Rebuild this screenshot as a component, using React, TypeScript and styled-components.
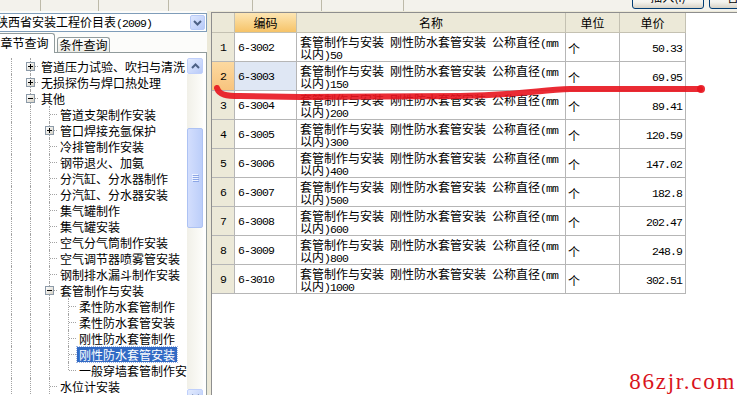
import { FC } from "react";
import styled, { createGlobalStyle, css } from "styled-components";

const GlobalStyle = createGlobalStyle`
  html, body {
    margin: 0;
    padding: 0;
  }
  body {
    width: 737px;
    height: 395px;
    overflow: hidden;
    background: #ece9d8;
    font-family: "Noto Sans CJK SC", "Liberation Sans", sans-serif;
    font-size: 12px;
    color: #000;
  }
`;

const Page = styled.div`
  position: relative;
  width: 737px;
  height: 395px;
  display: flex;
  flex-direction: column;
  overflow: hidden;
`;

// top strip, mostly cut off by the screenshot
const Toolbar = styled.div`
  height: 11px;
  flex: none;
  display: flex;
  align-items: flex-end;
  background: #f3f2ec;
  overflow: hidden;
`;

const ToolSlot = styled.div<{ $w: number }>`
  width: ${(p) => p.$w}px;
  height: 100%;
  flex: none;
  box-sizing: border-box;
  border-right: 1px solid #bdbaa9;
`;

const ToolSpacer = styled.div`
  flex: 1;
`;

const ToolButton = styled.div<{ $w: number; $gap: number; $pad?: number }>`
  flex: none;
  width: ${(p) => p.$w}px;
  height: 22px;
  margin: 0 0 2px ${(p) => p.$gap}px;
  box-sizing: border-box;
  border: 1px solid #003c74;
  border-radius: 3px;
  background: linear-gradient(#ffffff, #f4f3ee 70%, #d8d2c6);
  text-align: ${(p) => (p.$pad ? "left" : "center")};
  padding-left: ${(p) => p.$pad ?? 0}px;
  line-height: 17px;
  white-space: nowrap;
  &:last-child {
    margin-right: -32px;
  }
`;

const Main = styled.div`
  flex: 1;
  min-height: 0;
  display: flex;
`;

const LeftPanel = styled.div`
  width: 207px;
  flex: none;
  display: flex;
  flex-direction: column;
  padding-top: 2px;
  background: #fcfcfa;
`;

const Combo = styled.div`
  height: 19px;
  flex: none;
  display: flex;
  align-items: center;
  box-sizing: border-box;
  margin-left: -7px;
  padding-left: 2px;
  border: 1px solid #7f9db9;
  background: #fff;
`;

const ComboText = styled.span`
  flex: 1;
  white-space: nowrap;
  overflow: hidden;
  line-height: 17px;
`;

const ComboButton = styled.span`
  width: 15px;
  height: 15px;
  margin-right: 1px;
  flex: none;
  box-sizing: border-box;
  border: 1px solid #b9cbf7;
  border-radius: 2px;
  background: linear-gradient(135deg, #dde7fe, #b6c9f8);
  display: flex;
  align-items: center;
  justify-content: center;
`;

const Latin = styled.span`
  font-family: "Liberation Mono", monospace;
  font-size: 11.5px;
  letter-spacing: -0.9px;
`;

const TabStrip = styled.div`
  height: 20px;
  flex: none;
  margin-top: 1px;
  margin-bottom: -1px;
  display: flex;
  align-items: flex-end;
  position: relative;
  z-index: 1;
`;

const Tab = styled.div<{ $active?: boolean }>`
  flex: none;
  box-sizing: border-box;
  border: 1px solid #919b9c;
  border-bottom: none;
  border-radius: 3px 3px 0 0;
  text-align: center;
  white-space: nowrap;
  ${(p) =>
    p.$active
      ? css`
          width: 61px;
          height: 20px;
          margin-left: -6px;
          line-height: 18px;
          background: #fff;
        `
      : css`
          width: 53px;
          height: 15px;
          margin: 0 0 1px 2px;
          line-height: 14px;
          background: linear-gradient(#ffffff, #ecebe5);
        `}
`;

const TreeBox = styled.div`
  flex: 1;
  min-height: 0;
  display: flex;
  padding: 5px 3px 0 0;
  border-top: 1px solid #919b9c;
  border-right: 1px solid #919b9c;
  background: #fff;
  overflow: hidden;
`;

const TreeList = styled.div`
  flex: 1;
  min-width: 0;
  padding-left: 2px;
  overflow: hidden;
`;

const TreeRow = styled.div`
  display: flex;
  height: 16px;
  white-space: nowrap;
`;

const Guide = styled.span`
  position: relative;
  width: 19px;
  flex: none;
  &::before {
    content: "";
    position: absolute;
    left: 9px;
    top: 0;
    bottom: 0;
    border-left: 1px dotted #a3a3a3;
  }
`;

const Joint = styled.span<{ $last?: boolean }>`
  position: relative;
  width: 19px;
  flex: none;
  &::before {
    content: "";
    position: absolute;
    left: 9px;
    top: 0;
    height: ${(p) => (p.$last ? "8px" : "16px")};
    border-left: 1px dotted #a3a3a3;
  }
  &::after {
    content: "";
    position: absolute;
    left: 10px;
    right: 2px;
    top: 8px;
    border-top: 1px dotted #a3a3a3;
  }
`;

const Expander = styled.span`
  position: absolute;
  left: 5px;
  top: 4px;
  width: 9px;
  height: 9px;
  box-sizing: border-box;
  border: 1px solid #8c9aa8;
  background: linear-gradient(135deg, #ffffff, #d4d0c4);
  z-index: 1;
  display: flex;
  align-items: center;
  justify-content: center;
`;

const TreeLabel = styled.span<{ $selected?: boolean }>`
  align-self: center;
  margin-left: -1px;
  padding: 0 2px;
  height: 15px;
  line-height: 15px;
  ${(p) =>
    p.$selected &&
    css`
      background: #316ac5;
      color: #fff;
      outline: 1px dotted #9fb5e0;
    `}
`;

const ScrollBar = styled.div`
  width: 16px;
  height: 347px;
  flex: none;
  display: flex;
  flex-direction: column;
`;

const ScrollArrow = styled.div`
  height: 16px;
  flex: none;
  box-sizing: border-box;
  border: 1px solid #c0d0fb;
  border-radius: 2px;
  background: linear-gradient(135deg, #e3ebfe, #b9cbf8);
  display: flex;
  align-items: center;
  justify-content: center;
`;

const ScrollTrack = styled.div`
  flex: 1;
  padding-top: 54px;
  background: linear-gradient(90deg, #f1f0e8, #fdfdfa);
`;

const ScrollThumb = styled.div`
  height: 100px;
  box-sizing: border-box;
  border: 1px solid #adc2f3;
  border-radius: 2px;
  background: linear-gradient(90deg, #d3defd, #bccef9);
  display: flex;
  align-items: center;
  justify-content: center;
`;

const Splitter = styled.div`
  width: 4px;
  flex: none;
  background: #ece9d8;
`;

const RightPanel = styled.div`
  flex: 1;
  margin-top: 1px;
  border-top: 1px solid #8e8e8e;
  border-left: 1px solid #8e8e8e;
  background: #fff;
`;

const Grid = styled.div`
  display: grid;
  grid-template-columns: 23px 62px 269px 54px 66px;
  grid-template-rows: 20px;
  grid-auto-rows: 29px;
  width: max-content;
`;

const Cell = styled.div`
  box-sizing: border-box;
  border-right: 1px solid #b6b6b6;
  border-bottom: 1px solid #b6b6b6;
  display: flex;
  white-space: nowrap;
  overflow: hidden;
`;

const HeadCell = styled(Cell)<{ $active?: boolean }>`
  align-items: center;
  justify-content: center;
  line-height: 19px;
  background: ${(p) =>
    p.$active ? "linear-gradient(#fde6b3, #f6c368)" : "#ece9d8"};
  border-color: #c4c1b2;
`;

const NumCell = styled(Cell)<{ $current?: boolean }>`
  align-items: center;
  justify-content: center;
  padding-top: 1px;
  background: ${(p) =>
    p.$current ? "linear-gradient(#fcd9a0, #f8c47e)" : "#ece9d8"};
`;

const CodeCell = styled(Cell)<{ $current?: boolean }>`
  align-items: center;
  padding: 1px 0 0 3px;
  background: ${(p) => (p.$current ? "#dfe7f4" : "#fff")};
`;

const NameCell = styled(Cell)`
  flex-direction: column;
  padding: 3px 0 0 3px;
`;

const NameLine = styled.span`
  display: block;
  height: 12px;
  line-height: 12px;
  overflow: visible;
`;

const UnitCell = styled(Cell)`
  align-items: center;
  padding: 3px 0 0 2px;
`;

const PriceCell = styled(Cell)`
  align-items: center;
  justify-content: flex-end;
  padding: 2px 3px 0 0;
`;

const RedMark = styled.svg`
  position: absolute;
  left: 0;
  top: 0;
  pointer-events: none;
`;

const Watermark = styled.div`
  position: absolute;
  right: 1px;
  bottom: 2px;
  font-family: "Liberation Serif", serif;
  font-size: 23px;
  line-height: 1;
  letter-spacing: 1.7px;
  color: #d9141c;
`;

type TreeItem = {
  guides: number;
  text: string;
  exp?: "+" | "-";
  last?: boolean;
  selected?: boolean;
};

const treeItems: TreeItem[] = [
  { guides: 1, exp: "+", text: "管道压力试验、吹扫与清洗" },
  { guides: 1, exp: "+", text: "无损探伤与焊口热处理" },
  { guides: 1, exp: "-", text: "其他" },
  { guides: 2, text: "管道支架制作安装" },
  { guides: 2, exp: "+", text: "管口焊接充氩保护" },
  { guides: 2, text: "冷排管制作安装" },
  { guides: 2, text: "钢带退火、加氨" },
  { guides: 2, text: "分汽缸、分水器制作" },
  { guides: 2, text: "分汽缸、分水器安装" },
  { guides: 2, text: "集气罐制作" },
  { guides: 2, text: "集气罐安装" },
  { guides: 2, text: "空气分气筒制作安装" },
  { guides: 2, text: "空气调节器喷雾管安装" },
  { guides: 2, text: "钢制排水漏斗制作安装" },
  { guides: 2, exp: "-", text: "套管制作与安装" },
  { guides: 3, text: "柔性防水套管制作" },
  { guides: 3, text: "柔性防水套管安装" },
  { guides: 3, text: "刚性防水套管制作" },
  { guides: 3, text: "刚性防水套管安装", selected: true },
  { guides: 3, text: "一般穿墙套管制作安装", last: true },
  { guides: 2, text: "水位计安装" },
];

const rows = [
  { code: "6-3002", size: "50", price: "50.33" },
  { code: "6-3003", size: "150", price: "69.95" },
  { code: "6-3004", size: "200", price: "89.41" },
  { code: "6-3005", size: "300", price: "120.59" },
  { code: "6-3006", size: "400", price: "147.02" },
  { code: "6-3007", size: "500", price: "182.8" },
  { code: "6-3008", size: "600", price: "202.47" },
  { code: "6-3009", size: "800", price: "248.9" },
  { code: "6-3010", size: "1000", price: "302.51" },
];

const Chevron: FC<{ up?: boolean }> = ({ up }) => (
  <svg width="9" height="6" viewBox="0 0 9 6">
    <path
      d={up ? "M1 5 L4.5 1.5 L8 5" : "M1 1 L4.5 4.5 L8 1"}
      fill="none"
      stroke="#4d6185"
      strokeWidth="2"
    />
  </svg>
);

const PlusMinus: FC<{ plus: boolean }> = ({ plus }) => (
  <svg width="5" height="5" viewBox="0 0 5 5" shapeRendering="crispEdges">
    <rect x="0" y="2" width="5" height="1" fill="#000" />
    {plus && <rect x="2" y="0" width="1" height="5" fill="#000" />}
  </svg>
);

const App: FC = () => {
  return (
    <Page>
      <GlobalStyle />
      <Toolbar>
        {[41, 58, 70, 84, 69, 82].map((w, i) => (
          <ToolSlot key={i} $w={w} />
        ))}
        <ToolSpacer />
        <ToolButton $w={72} $gap={0}>
          插入(I)
        </ToolButton>
        <ToolButton $w={60} $gap={5} $pad={17}>
          替换(R)
        </ToolButton>
      </Toolbar>
      <Main>
        <LeftPanel>
          <Combo>
            <ComboText>
              陕西省安装工程价目表<Latin>(2009)</Latin>
            </ComboText>
            <ComboButton>
              <Chevron />
            </ComboButton>
          </Combo>
          <TabStrip>
            <Tab $active>章节查询</Tab>
            <Tab>条件查询</Tab>
          </TabStrip>
          <TreeBox>
            <TreeList>
              {treeItems.map((item) => (
                <TreeRow key={item.text}>
                  {Array.from({ length: item.guides }).map((_, i) => (
                    <Guide key={i} />
                  ))}
                  <Joint $last={item.last}>
                    {item.exp && (
                      <Expander>
                        <PlusMinus plus={item.exp === "+"} />
                      </Expander>
                    )}
                  </Joint>
                  <TreeLabel $selected={item.selected}>{item.text}</TreeLabel>
                </TreeRow>
              ))}
            </TreeList>
            <ScrollBar>
              <ScrollArrow>
                <Chevron up />
              </ScrollArrow>
              <ScrollTrack>
                <ScrollThumb>
                  <svg width="7" height="8" viewBox="0 0 7 8" shapeRendering="crispEdges">
                    {[0, 2, 4, 6].map((y) => (
                      <g key={y}>
                        <rect x="0" y={y} width="6" height="1" fill="#eef3ff" />
                        <rect x="1" y={y + 1} width="6" height="1" fill="#8ca6e6" />
                      </g>
                    ))}
                  </svg>
                </ScrollThumb>
              </ScrollTrack>
              <ScrollArrow>
                <Chevron />
              </ScrollArrow>
            </ScrollBar>
          </TreeBox>
        </LeftPanel>
        <Splitter />
        <RightPanel>
          <Grid>
            <HeadCell />
            <HeadCell $active>编码</HeadCell>
            <HeadCell>名称</HeadCell>
            <HeadCell>单位</HeadCell>
            <HeadCell>单价</HeadCell>
            {rows.map((r, i) => {
              const current = i === 1;
              return [
                <NumCell key={`n${i}`} $current={current}>
                  <Latin>{i + 1}</Latin>
                </NumCell>,
                <CodeCell key={`c${i}`} $current={current}>
                  <Latin>{r.code}</Latin>
                </CodeCell>,
                <NameCell key={`m${i}`}>
                  <NameLine>
                    套管制作与安装<Latin> </Latin>刚性防水套管安装<Latin> </Latin>公称直径
                    <Latin>(mm</Latin>
                  </NameLine>
                  <NameLine>
                    以内<Latin>){r.size}</Latin>
                  </NameLine>
                </NameCell>,
                <UnitCell key={`u${i}`}>个</UnitCell>,
                <PriceCell key={`p${i}`}>
                  <Latin>{r.price}</Latin>
                </PriceCell>,
              ];
            })}
          </Grid>
        </RightPanel>
      </Main>
      <RedMark width="737" height="395" viewBox="0 0 737 395">
        <path
          d="M217 88 C 219 95, 226 96, 240 96 L 300 97 L 460 96 C 520 95, 540 90, 570 89 L 700 89"
          fill="none"
          stroke="#e8141e"
          strokeWidth="6"
          strokeLinecap="round"
          strokeLinejoin="round"
          opacity="0.9"
        />
        <circle cx="701" cy="89" r="4" fill="#e8141e" opacity="0.9" />
      </RedMark>
      <Watermark>86zjr.com</Watermark>
    </Page>
  );
};

export default App;
